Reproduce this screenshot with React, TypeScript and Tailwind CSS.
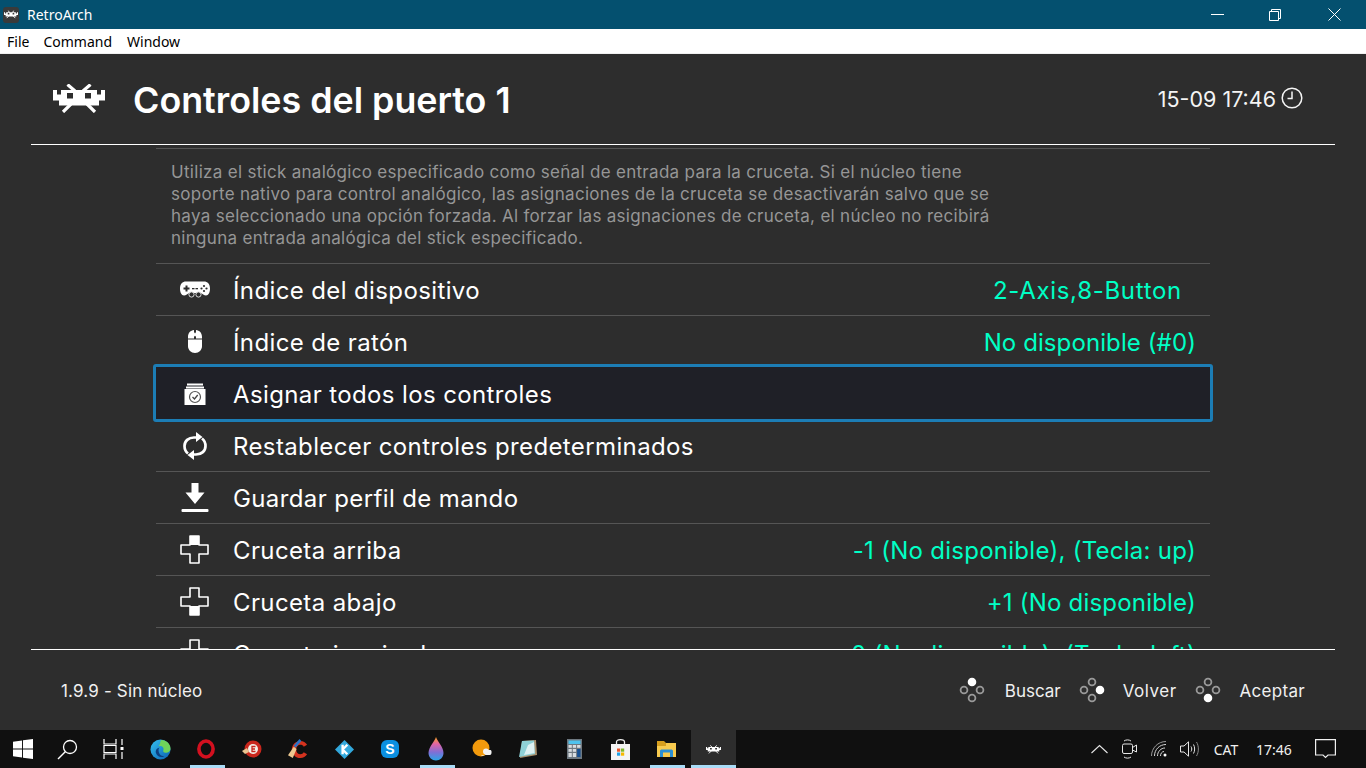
import React from "react";

const INTER = "font-['Inter',sans-serif]";

function Logo({ className }: { className: string }) {
  return (
    <svg viewBox="0 0 52 29" className={className}>
      <g stroke="currentColor" strokeWidth="3.200" fill="none">
        <path d="M14.500 0.500L22 7M37.500 0.500L30 7M18 20L10 28M34 20L42 28" />
      </g>
      <path
        fill="currentColor"
        fillRule="evenodd"
        d="M0 6H4V10.500H8V6H44V10.500H48V6H52V16.500H46V21.500H6V16.500H0ZM14 9V14.500H20V9ZM32 9V14.500H38V9Z"
      />
    </svg>
  );
}

function Gamepad() {
  return (
    <svg viewBox="0 0 30 17" className="w-[30px] h-[17px]">
      <path fill="#fff" d="M6 0.500H24C27.500 0.500 30 3 30 7.500C30 11.500 28.500 14.500 26 14.500C24 14.500 22.500 12.500 20 12H10C7.500 12.500 6 14.500 4 14.500C1.500 14.500 0 11.500 0 7.500C0 3 2.500 0.500 6 0.500Z" />
      <g fill="#2d2d2d">
        <rect x="3.500" y="6.500" width="6" height="2" />
        <rect x="5.500" y="4.500" width="2" height="6" />
        <circle cx="24" cy="5" r="1.100" />
        <circle cx="24" cy="10" r="1.100" />
        <circle cx="21.500" cy="7.500" r="1.100" />
        <circle cx="26.500" cy="7.500" r="1.100" />
        <rect x="12" y="7" width="2.500" height="1.300" />
        <rect x="15.500" y="7" width="2.500" height="1.300" />
      </g>
      <circle cx="11.500" cy="13.500" r="2.600" fill="#2d2d2d" stroke="#ddd" strokeWidth="1" />
      <circle cx="18.500" cy="13.500" r="2.600" fill="#2d2d2d" stroke="#ddd" strokeWidth="1" />
    </svg>
  );
}

function MouseIcon() {
  return (
    <svg viewBox="0 0 14 23" className="w-[14px] h-[23px]">
      <path fill="#fff" d="M0 9.500H14V16C14 20 11 23 7 23C3 23 0 20 0 16Z" />
      <path fill="#fff" d="M0 8.500V7C0 3 2.500 0.300 6 0V8.500ZM8 0C11.500 0.300 14 3 14 7V8.500H8Z" />
      <rect x="6" y="2.500" width="2" height="4" rx="1" fill="#fff" />
    </svg>
  );
}

function ArchiveCheck() {
  return (
    <svg viewBox="0 0 22 22" className="w-[22px] h-[22px]">
      <rect x="3" y="0.500" width="16" height="2" fill="#fff" />
      <rect x="2" y="3.500" width="18" height="2" fill="#fff" />
      <rect x="0.500" y="6" width="21" height="16" fill="#fff" />
      <circle cx="11" cy="14" r="5.500" fill="none" stroke="#555" strokeWidth="1.200" />
      <path d="M8.500 14L10.500 16L13.700 12" fill="none" stroke="#444" strokeWidth="1.300" />
    </svg>
  );
}

function Refresh() {
  return (
    <svg viewBox="0 0 24 28" className="w-[24px] h-[28px]">
      <g fill="none" stroke="#fff" strokeWidth="2.700">
        <path d="M5 21.500C2.500 19.500 1.500 17 1.500 14C1.500 9 5.500 5.500 11 5.500H14" />
        <path d="M19 6.500C21.500 8.500 22.500 11 22.500 14C22.500 19 18.500 22.500 13 22.500H10" />
      </g>
      <path fill="#fff" d="M13 0L19.500 5L13 10ZM11 18L4.500 23L11 28Z" />
    </svg>
  );
}

function Download() {
  return (
    <svg viewBox="0 0 28 29" className="w-[28px] h-[29px]">
      <path fill="#fff" d="M10.500 0H17.500V9.500H23.500L14 21L4.500 9.500H10.500Z" />
      <rect x="0.500" y="26" width="27" height="3" rx="1" fill="#fff" />
    </svg>
  );
}

function Dpad({ dir }: { dir: "up" | "down" | "left" }) {
  return (
    <svg viewBox="0 0 29 29" className="w-[29px] h-[29px]">
      {dir === "up" && <path fill="#fff" d="M10 1H19V10H10Z" />}
      {dir === "down" && <path fill="#fff" d="M10 19H19V28H10Z" />}
      {dir === "left" && <path fill="#fff" d="M1 10H10V19H1Z" />}
      <path
        fill="none"
        stroke="#fff"
        strokeWidth="1.600"
        strokeLinejoin="round"
        d="M10 1H19V10H28V19H19V28H10V19H1V10H10Z"
      />
    </svg>
  );
}

type RowT = { icon: React.ReactNode; label: string; value?: string; pad?: string; selected?: boolean };

const rows: RowT[] = [
  { icon: <Gamepad />, label: "Índice del dispositivo", value: "2-Axis,8-Button", pad: "pr-[28px] tracking-[0.7px]" },
  { icon: <MouseIcon />, label: "Índice de ratón", value: "No disponible (#0)", pad: "pr-[14px] tracking-[0.1px]" },
  { icon: <ArchiveCheck />, label: "Asignar todos los controles", selected: true },
  { icon: <Refresh />, label: "Restablecer controles predeterminados" },
  { icon: <Download />, label: "Guardar perfil de mando" },
  { icon: <Dpad dir="up" />, label: "Cruceta arriba", value: "-1 (No disponible), (Tecla: up)", pad: "pr-[14px] tracking-[0.27px]" },
  { icon: <Dpad dir="down" />, label: "Cruceta abajo", value: "+1 (No disponible)", pad: "pr-[14px] tracking-[0.2px]" },
  { icon: <Dpad dir="left" />, label: "Cruceta izquierda", value: "-0 (No disponible), (Tecla: left)", pad: "pr-[14px] tracking-[0.27px]" },
];

function Row({ r }: { r: RowT }) {
  return (
    <div className="relative h-[52px] border-b border-[#555555] flex items-center text-[24px] text-white">
      {r.selected && (
        <div className="absolute left-[-3px] right-[-3px] top-[-4px] bottom-[-3px] bg-[#1f2027] border-[3px] border-[#1c7db5] rounded-[3px]" />
      )}
      <div className="relative w-[77px] shrink-0 flex justify-center items-center">{r.icon}</div>
      <div className="relative flex-1 pt-[2px] tracking-[0.38px]">{r.label}</div>
      {r.value && <div className={`relative pt-[2px] text-[#00ffc5] ${r.pad}`}>{r.value}</div>}
    </div>
  );
}

function PadButtons({ active }: { active: "top" | "right" | "bottom" }) {
  const c = (on: boolean) => (on ? { fill: "#fff", stroke: "#fff" } : { fill: "none", stroke: "#999" });
  return (
    <svg viewBox="0 0 26 26" className="w-[26px] h-[26px]">
      <g strokeWidth="1.800">
        <circle cx="13" cy="5" r="3.400" {...c(active === "top")} />
        <circle cx="21" cy="13" r="3.400" {...c(active === "right")} />
        <circle cx="13" cy="21" r="3.400" {...c(active === "bottom")} />
        <circle cx="5" cy="13" r="3.400" {...c(false)} />
      </g>
    </svg>
  );
}

function TaskItem({ children, active, current }: { children: React.ReactNode; active?: boolean; current?: boolean }) {
  return (
    <div className={`relative h-full flex items-center justify-center shrink-0 ${current ? "bg-[#2d2d2d] w-[45px] ml-[2px]" : "w-[46px]"}`}>
      {children}
      {active && <div className={`absolute bottom-0 h-[3px] bg-[#a9dcf7] ${current ? "left-0 right-0" : "left-[7px] right-[4px]"}`} />}
    </div>
  );
}

function TaskBar() {
  return (
    <div className="h-[38px] bg-[#101010] flex items-center shrink-0">
      <div className="w-[45px] h-full flex items-center justify-center">
        <svg viewBox="0 0 21 21" className="w-[20px] h-[20px]">
          <path fill="#fff" d="M0 3L9.500 1.600V10H0ZM10.500 1.400L21 0V10H10.500ZM0 11H9.500V19.400L0 18ZM10.500 11H21V21L10.500 19.600Z" />
        </svg>
      </div>
      <div className="w-[45px] h-full flex items-center justify-center">
        <svg viewBox="0 0 21 21" className="w-[21px] h-[21px]">
          <circle cx="13" cy="8" r="6.500" fill="none" stroke="#fff" strokeWidth="1.300" />
          <path d="M8.500 12.500L1 20" stroke="#fff" strokeWidth="1.500" />
        </svg>
      </div>
      <div className="w-[47px] h-full flex items-center justify-center">
        <svg viewBox="0 0 22 20" className="w-[22px] h-[20px]">
          <g fill="none" stroke="#fff" strokeWidth="1.200">
            <path d="M1 0V5H13V0M1 20V15H13V20M1 6.500H13V13.500H1ZM19 0V6M19 13V20" />
          </g>
          <rect x="17.500" y="8" width="3" height="3" fill="#fff" />
        </svg>
      </div>

      <TaskItem>
        <svg viewBox="0 0 22 22" className="w-[21px] h-[21px]">
          <defs>
            <linearGradient id="edgeG" x1="0" y1="0" x2="1" y2="1">
              <stop offset="0" stopColor="#35c1f1" />
              <stop offset="1" stopColor="#0a5fb0" />
            </linearGradient>
          </defs>
          <circle cx="11" cy="11" r="10.500" fill="url(#edgeG)" />
          <path d="M12 1C17 1 21.500 5 21.500 10C21.500 13 19 14.500 16.500 14.500C14 14.500 13.500 13 14 11.500C15 8.500 12 6.500 9 7.500C12 3.500 10 2 12 1Z" fill="#6fd45a" />
          <path d="M9 12C9 15 11 18 15 18C12 20 7 19 6 14C5.800 12 7 9.500 10 9C9 10 9 11 9 12Z" fill="#0c3f80" />
        </svg>
      </TaskItem>
      <TaskItem active>
        <svg viewBox="0 0 20 22" className="w-[20px] h-[20px]">
          <ellipse cx="10" cy="11" rx="7.800" ry="8.800" fill="none" stroke="#d3101f" strokeWidth="4" />
        </svg>
      </TaskItem>
      <TaskItem>
        <svg viewBox="0 0 20 20" className="w-[20px] h-[20px]">
          <circle cx="11" cy="10" r="8.500" fill="#c9261c" />
          <circle cx="11" cy="10" r="5" fill="#f4f0ea" />
          <path d="M13.500 7.500H10V12.500H13.500M10 10H13" fill="none" stroke="#c9261c" strokeWidth="1.300" />
          <path d="M0 12L5 9L7 13L3 15Z" fill="#eac591" />
        </svg>
      </TaskItem>
      <TaskItem>
        <svg viewBox="0 0 22 22" className="w-[21px] h-[21px]">
          <path d="M20 6C18.500 3.500 16 2 13 2C8 2 4 6 4 11C4 16 8 20 13 20C16 20 18.500 18.500 20 16L16.500 14C15.800 15.300 14.500 16 13 16C10.500 16 8.500 13.800 8.500 11C8.500 8.200 10.500 6 13 6C14.500 6 15.800 6.700 16.500 8Z" fill="#d4331f" />
          <path d="M12 0L14 2L8 9L6 7Z" fill="#2a74c9" />
          <path d="M0 17L6 8L9 10.500L5 20Z" fill="#edc890" />
        </svg>
      </TaskItem>
      <TaskItem>
        <svg viewBox="0 0 20 20" className="w-[19px] h-[19px]">
          <path d="M10 0L20 10L10 20L0 10Z" fill="#32a8dc" />
          <path d="M8 5V15M8 10L13 5M8 10L13 15" fill="none" stroke="#fff" strokeWidth="2.500" />
        </svg>
      </TaskItem>
      <TaskItem>
        <div className="w-[18px] h-[18px] rounded-[6px] bg-[#0b8fe0] flex items-center justify-center font-['Liberation_Sans',sans-serif] font-bold text-[14px] leading-none text-white">
          S
        </div>
      </TaskItem>
      <TaskItem active>
        <svg viewBox="0 0 16 26" className="w-[16px] h-[26px]">
          <defs>
            <linearGradient id="paintG" x1="0" y1="0" x2="0" y2="1">
              <stop offset="0" stopColor="#f7a11f" />
              <stop offset="0.300" stopColor="#e064a6" />
              <stop offset="0.650" stopColor="#7f6fd6" />
              <stop offset="1" stopColor="#28a6e8" />
            </linearGradient>
          </defs>
          <path d="M8 1C9 5 15.500 11 15.500 17C15.500 21.500 12 24.500 8 24.500C4 24.500 0.500 21.500 0.500 17C0.500 11 7 5 8 1Z" fill="url(#paintG)" />
        </svg>
      </TaskItem>
      <TaskItem>
        <svg viewBox="0 0 20 20" className="w-[20px] h-[20px]">
          <circle cx="9" cy="9" r="8.500" fill="#f39a0c" />
          <path d="M9 17C13 17 15 14 15 11H18.500C20 11 20 16 18 16H10Z" fill="#f2f2f2" />
          <circle cx="14" cy="12.500" r="3" fill="#f2f2f2" />
        </svg>
      </TaskItem>
      <TaskItem>
        <svg viewBox="0 0 20 20" className="w-[20px] h-[20px]">
          <path d="M4 2L18 1L19 16L2 19Z" fill="#a98f6c" />
          <path d="M4 2L16 1.500L17 15L1 18Z" fill="#8fd1d6" />
          <path d="M10 6L16 3L16.500 14L6 16Z" fill="#dff1f2" />
        </svg>
      </TaskItem>
      <TaskItem>
        <svg viewBox="0 0 15 20" className="w-[15px] h-[20px]">
          <rect width="15" height="20" fill="#6e7880" />
          <rect x="1.500" y="1.500" width="12" height="3.500" fill="#4fc3ee" />
          <g fill="#d9dde0">
            <rect x="1.500" y="6" width="3.300" height="2.800" />
            <rect x="5.800" y="6" width="3.300" height="2.800" />
            <rect x="10.100" y="6" width="3.400" height="2.800" />
            <rect x="1.500" y="10" width="3.300" height="2.800" />
            <rect x="5.800" y="10" width="3.300" height="2.800" />
            <rect x="1.500" y="14" width="3.300" height="4" />
            <rect x="5.800" y="14" width="3.300" height="4" />
          </g>
          <rect x="10.100" y="10" width="3.400" height="8" fill="#174f90" />
        </svg>
      </TaskItem>
      <TaskItem>
        <svg viewBox="0 0 19 21" className="w-[19px] h-[21px]">
          <path d="M5.500 6V3C5.500 1.500 7 0.700 9.500 0.700C12 0.700 13.500 1.500 13.500 3V6" fill="none" stroke="#eee" strokeWidth="1.300" />
          <rect y="5" width="19" height="16" fill="#f4f4f4" />
          <rect x="6" y="9.500" width="3.200" height="3.200" fill="#e9552a" />
          <rect x="10" y="9.500" width="3.200" height="3.200" fill="#7db928" />
          <rect x="6" y="13.500" width="3.200" height="3.200" fill="#1da1e6" />
          <rect x="10" y="13.500" width="3.200" height="3.200" fill="#f7b900" />
        </svg>
      </TaskItem>
      <TaskItem active>
        <svg viewBox="0 0 19 16" className="w-[19px] h-[16px]">
          <path d="M0 0H7L9 2H0Z" fill="#d79f1e" />
          <rect y="2" width="19" height="14" fill="#f8cb4f" />
          <rect y="2" width="9" height="3" fill="#d79f1e" />
          <path d="M3 16V10C3 9 4 8.500 5 8.500H14C15 8.500 16 9 16 10V16H13V11.500H6V16Z" fill="#2b8fd4" />
        </svg>
      </TaskItem>
      <TaskItem active current>
        <Logo className="w-[15px] h-[9px] text-white" />
      </TaskItem>

      <div className="flex-1" />

      <div className="flex items-center h-full text-[#f0f0f0] font-['Noto_Sans',sans-serif] text-[14px]">
        <svg viewBox="0 0 17 10" className="w-[17px] h-[10px] mr-[14px]">
          <path d="M0.500 9L8.500 1.500L16.500 9" fill="none" stroke="#e6e6e6" strokeWidth="1.100" />
        </svg>
        <svg viewBox="0 0 15 20" className="w-[15px] h-[20px] mr-[14px]">
          <g fill="none" stroke="#e6e6e6" strokeWidth="1">
            <rect x="0.500" y="5" width="10" height="9.500" rx="1.500" />
            <path d="M10.500 8.500L14.500 6V13L10.500 11" />
            <path d="M2 2C4 0.500 7 0.500 9 2M2 18C4 19.500 7 19.500 9 18" />
          </g>
        </svg>
        <svg viewBox="0 0 16 16" className="w-[16px] h-[16px] mr-[13px]">
          <g fill="none" stroke="#d8d8d8" strokeWidth="1">
            <path d="M0.500 15C0.500 7 7 0.500 15 0.500" stroke="#999" />
            <path d="M3.500 15C3.500 8.500 8.500 3.500 15 3.500" />
            <path d="M6.500 15C6.500 10.500 10 7 14 7" />
            <path d="M9.500 15C9.500 12.500 11 10.500 13 10.500" />
          </g>
          <circle cx="14" cy="14" r="1.500" fill="#fff" />
        </svg>
        <svg viewBox="0 0 20 16" className="w-[20px] h-[16px] mr-[12px]">
          <path d="M0.500 5H4L8.500 0.800V15.200L4 11H0.500Z" fill="none" stroke="#e6e6e6" strokeWidth="1" />
          <g fill="none" stroke="#e6e6e6" strokeWidth="1">
            <path d="M11 5.500C12 7 12 9 11 10.500" />
            <path d="M13.500 3.500C15 6 15 10 13.500 12.500" />
          </g>
          <path d="M16.500 1C19 5 19 11 16.500 15" fill="none" stroke="#888" strokeWidth="1" />
        </svg>
        <span className="w-[28px] text-center mr-[16px]">CAT</span>
        <span className="w-[36px] text-center mr-[23px]">17:46</span>
        <svg viewBox="0 0 21 20" className="w-[21px] h-[20px] mr-[30px]">
          <path d="M0.600 0.600H20.400V16H13L10.500 18.500L8 16H0.600Z" fill="none" stroke="#f0f0f0" strokeWidth="1.200" />
        </svg>
      </div>
    </div>
  );
}

export default function App() {
  return (
    <div className={`w-[1366px] h-[768px] flex flex-col overflow-hidden bg-[#2d2d2d] ${INTER}`}>
      <div className="h-[29px] bg-[#04506f] flex items-center shrink-0 font-['Noto_Sans',sans-serif] text-[14px] text-white">
        <div className="w-[16px] h-[16px] ml-[3px] mr-[8px] rounded-[3px] bg-[#3a3a3a] flex items-center justify-center">
          <Logo className="w-[14px] h-[9px] text-white" />
        </div>
        <span>RetroArch</span>
        <div className="flex-1" />
        <div className="w-[46px] flex justify-center">
          <div className="w-[13px] h-px bg-white" />
        </div>
        <div className="w-[46px] ml-[12px] flex justify-center">
          <svg viewBox="0 0 12 12" className="w-[12px] h-[12px]">
            <path d="M2.500 2.500V0.500H11.500V9.500H9.500M0.500 2.500H9.500V11.500H0.500Z" fill="none" stroke="#fff" strokeWidth="1" />
          </svg>
        </div>
        <div className="w-[46px] ml-[13px] mr-[9px] flex justify-center">
          <svg viewBox="0 0 13 13" className="w-[13px] h-[13px]">
            <path d="M0.500 0.500L12.500 12.500M12.500 0.500L0.500 12.500" stroke="#fff" strokeWidth="1" />
          </svg>
        </div>
      </div>

      <div className="h-[24px] bg-white flex items-center gap-[14px] pl-[7px] shrink-0 font-['Noto_Sans',sans-serif] text-[14px] text-black">
        <span>File</span>
        <span>Command</span>
        <span className="ml-[1px]">Window</span>
      </div>
      <div className="h-px bg-[#f0f0f0] shrink-0" />

      <div className="flex-1 flex flex-col min-h-0 px-[31px]">
        <div className="h-[91px] border-b border-white flex items-center shrink-0 text-white">
          <Logo className="w-[52px] h-[29px] ml-[22px] mb-[1px] text-white" />
          <h1 className="ml-[28px] pt-[3px] text-[35.8px] font-semibold leading-none">Controles del puerto 1</h1>
          <div className="flex-1" />
          <span className="pt-[2px] text-[21.5px] leading-none text-[#f4f4f4]">15-09 17:46</span>
          <svg viewBox="0 0 22 22" className="w-[22px] h-[22px] ml-[5px] mr-[32px] mb-[3px]">
            <circle cx="11" cy="11" r="9.800" fill="none" stroke="#f4f4f4" strokeWidth="1.500" />
            <path d="M11 4.500V11.500H6.500" fill="none" stroke="#f4f4f4" strokeWidth="1.500" />
          </svg>
        </div>

        <div className="flex-1 min-h-0 overflow-hidden mx-[122px] px-[3px] pt-[3px]">
          <div className="border-t border-[#555555] h-[116px] border-b pl-[15px] pt-[12px] text-[17px] tracking-[0.3px] leading-[22px] text-[#969696] whitespace-nowrap">
            Utiliza el stick analógico especificado como señal de entrada para la cruceta. Si el núcleo tiene
            <br />
            soporte nativo para control analógico, las asignaciones de la cruceta se desactivarán salvo que se
            <br />
            haya seleccionado una opción forzada. Al forzar las asignaciones de cruceta, el núcleo no recibirá
            <br />
            ninguna entrada analógica del stick especificado.
          </div>
          {rows.map((r) => (
            <Row key={r.label} r={r} />
          ))}
        </div>

        <div className="h-[81px] border-t border-white flex items-center shrink-0 text-[17px] text-[#f0f0f0]">
          <span className="ml-[30px] pt-[4px] tracking-[0.17px]">1.9.9 - Sin núcleo</span>
          <div className="flex-1" />
          <PadButtons active="top" />
          <span className="ml-[20px] mr-[18px] pt-[4px]">Buscar</span>
          <PadButtons active="right" />
          <span className="ml-[18px] mr-[18px] pt-[4px] tracking-[0.5px]">Volver</span>
          <PadButtons active="bottom" />
          <span className="ml-[19px] mr-[30px] pt-[4px] tracking-[0.3px]">Aceptar</span>
        </div>
      </div>

      <TaskBar />
    </div>
  );
}
